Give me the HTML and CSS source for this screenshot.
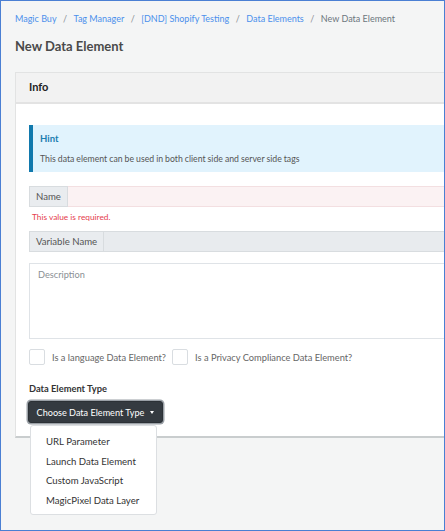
FILE: index.html
```html
<!DOCTYPE html>
<html>
<head>
<meta charset="utf-8">
<link rel="stylesheet" href="styles.css">
</head>
<body>
<div class="frame">
  <nav class="crumbs">
    <a>Magic Buy</a><span class="sep">/</span><a>Tag Manager</a><span class="sep">/</span><a>[DND] Shopify Testing</a><span class="sep">/</span><a>Data Elements</a><span class="sep">/</span><span class="current">New Data Element</span>
  </nav>
  <h1 class="title">New Data Element</h1>
  <div class="card">
    <div class="card-header">Info</div>
    <div class="card-body">
      <div class="hint">
        <div class="hint-title">Hint</div>
        <div class="hint-text">This data element can be used in both client side and server side tags</div>
      </div>
      <div class="group invalid">
        <span class="addon">Name</span>
        <span class="field"></span>
      </div>
      <div class="error">This value is required.</div>
      <div class="group disabled">
        <span class="addon">Variable Name</span>
        <span class="field"></span>
      </div>
      <div class="textarea">Description</div>
      <div class="checks">
        <span class="box"></span><span class="check-label">Is a language Data Element?</span>
        <span class="box"></span><span class="check-label">Is a Privacy Compliance Data Element?</span>
      </div>
      <div class="type-label">Data Element Type</div>
      <div class="dropdown">
        <button class="btn">Choose Data Element Type <span class="caret"></span></button>
        <ul class="menu">
          <li>URL Parameter</li>
          <li>Launch Data Element</li>
          <li>Custom JavaScript</li>
          <li>MagicPixel Data Layer</li>
        </ul>
      </div>
    </div>
  </div>
</div>
</body>
</html>
```
FILE: styles.css
```css
* { box-sizing: border-box; }
html, body { margin: 0; padding: 0; }
body { font-family: "Lato", "Noto Sans", sans-serif; color: #555; }
.frame {
  width: 445px; height: 531px;
  border: 1px solid #4a7fd3;
  background: #f4f5f5;
  overflow: hidden;
  padding: 11px 0 0 14px;
}
.crumbs { font-size: 9px; line-height: 14px; height: 14px; white-space: nowrap; }
.crumbs a { color: #4b90ec; }
.crumbs .sep { color: #8a8f94; margin: 0 6.5px; }
.crumbs .current { color: #6c757d; }
.title { margin: 12px 0 0; font-size: 13px; line-height: 16px; font-weight: 700; color: #4a4a4a; }
.card {
  margin-top: 18px; width: 470px;
  background: #fff;
  border: 1px solid #e2e3e3;
  border-bottom: 2px solid #c9cdce;
}
.card-header {
  height: 31px; background: #f2f2f2;
  border-bottom: 2px solid #e3e3e3;
  padding-left: 13px;
  font-size: 11px; font-weight: 700; color: #222;
  line-height: 28px;
}
.card-body { padding: 21px 0 13px 13px; }
.hint {
  height: 47px; background: #e1f3fd;
  border-left: 4px solid #1179ad;
  padding: 7px 0 0 7px;
}
.hint-title { font-size: 9.5px; font-weight: 700; color: #1c7fb1; line-height: 13px; }
.hint-text { font-size: 8.7px; word-spacing: -0.2px; color: #555; line-height: 13px; margin-top: 7px; }
.group { display: flex; height: 21px; margin-top: 14px; font-size: 9.6px; }
.addon {
  display: flex; align-items: center; padding: 0 6px;
  background: #e9ecef; border: 1px solid #d8dcdf; color: #555;
}
.field { flex: 1; border: 1px solid #d8dcdf; border-left: none; }
.invalid .field { background: #fbf2f3; border-color: #f3dfe1; }
.disabled .field { background: #e8ebee; }
.disabled { margin-top: 8px; }
.error { font-size: 8.3px; color: #e5404d; margin: 5px 0 0 3px; line-height: 11px; }
.textarea {
  margin-top: 11px; height: 76px;
  border: 1px solid #dfe3e7; border-right: none;
  padding: 5px 8px; font-size: 9.2px; color: #8a8f94;
}
.checks { display: flex; align-items: center; margin-top: 10px; height: 16px; font-size: 9.3px; }
.box { width: 16px; height: 16px; border: 1px solid #d9dde1; border-radius: 2px; background: #fff; }
.check-label { margin: 0 6px 0 7px; color: #666; }
.type-label { margin-top: 18px; font-size: 9.3px; font-weight: 700; color: #333; line-height: 12px; }
.dropdown { position: relative; margin-top: 6px; height: 22px; }
.btn {
  margin: 0 0 0 -1px; height: 22px; width: 135px; white-space: nowrap;
  background: #343a40; color: #fff;
  border: 1px solid #2c3136; border-radius: 3px;
  box-shadow: 0 0 0 1.5px #9aa0a6;
  font-family: inherit; font-size: 9.1px; padding: 0;
  display: flex; align-items: center; justify-content: center; gap: 6px;
}
.caret { width: 0; height: 0; border-left: 2.5px solid transparent; border-right: 2.5px solid transparent; border-top: 3px solid #fff; }
.menu {
  position: absolute; left: 1px; top: 24px; width: 127px; height: 90px;
  margin: 0; padding: 6px 0 0; list-style: none;
  background: #fff; border: 1px solid #dcdfe2; border-radius: 3px;
  font-size: 9.6px; color: #333;
}
.menu li { padding-left: 15px; line-height: 19.5px; }
```
